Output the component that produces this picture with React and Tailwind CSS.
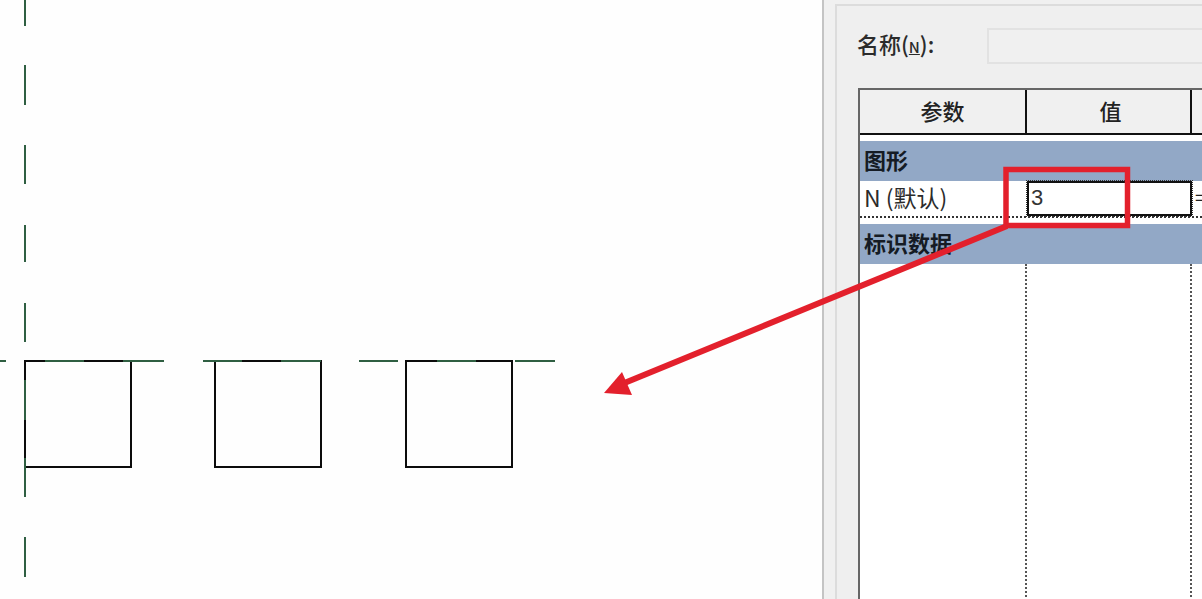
import React from 'react';

const cjk = "font-['Noto_Sans_CJK_SC','Liberation_Sans',sans-serif]";

const GREEN = '#2f5f42';

// segments on the reference lines: green dashes and the black square edges
const greenLines = [
  [25, 0, 25, 26], [25, 65, 25, 105], [25, 145, 25, 184], [25, 225, 25, 262], [25, 303, 25, 342],
  [25, 380, 25, 420], [25, 458, 25, 497], [25, 537, 25, 577],
  [0, 361, 6, 361], [45, 361, 84, 361], [123, 361, 164, 361], [203, 361, 242, 361], [281, 361, 321, 361],
  [359, 361, 398, 361], [437, 361, 476, 361], [515, 361, 555, 361],
];

const blackLines = [
  [25, 361, 45, 361], [84, 361, 123, 361], [131, 360, 131, 468], [24, 467, 132, 467],
  [25, 360, 25, 380], [25, 420, 25, 458],
  [242, 361, 281, 361], [215, 360, 215, 468], [321, 360, 321, 468], [214, 467, 322, 467],
  [405, 361, 437, 361], [476, 361, 513, 361], [406, 360, 406, 468], [512, 360, 512, 468], [405, 467, 513, 467],
];

function Drawing() {
  return (
    <svg width="822" height="599" className="block shrink-0 bg-[#fefefe]">
      {blackLines.map((l, i) => (
        <line key={i} x1={l[0]} y1={l[1]} x2={l[2]} y2={l[3]} stroke="#0c0c0c" strokeWidth="2" />
      ))}
      {greenLines.map((l, i) => (
        <line key={i} x1={l[0]} y1={l[1]} x2={l[2]} y2={l[3]} stroke={GREEN} strokeWidth="2" />
      ))}
    </svg>
  );
}

function GroupRow({ children }) {
  return (
    <div className="h-[40px] bg-[#92a8c6] pl-[4px] text-[22px] leading-[37px] font-bold text-[#151b24]">
      {children}
    </div>
  );
}

function ParamTable() {
  return (
    <div className="ml-px flex h-[520px] w-[400px] flex-col border-t-2 border-l-2 border-[#666666] bg-white">
      <div className="flex h-[45px] shrink-0 border-b-2 border-[#111111] bg-[#f0f0f0] text-[22px] leading-[41px] font-medium text-[#222222]">
        <div className="w-[167px] border-r-2 border-[#111111] text-center">参数</div>
        <div className="w-[165px] border-r-2 border-[#111111] pl-[4px] text-center">值</div>
        <div className="flex-1" />
      </div>
      <div className="h-[6px] shrink-0" />
      <GroupRow>图形</GroupRow>
      <div className="flex h-[37px] shrink-0 border-b-2 border-dotted border-[#333333]">
        <div className="w-[167px] shrink-0 pl-[4px] text-[23px] leading-[32px] text-[#2b2b2b]">N (默认)</div>
        <div className="h-[35px] w-[165px] shrink-0 border-2 border-[#111111] pl-[2px] font-['Liberation_Sans',sans-serif] text-[22px] leading-[29px] text-[#333333] outline-1 outline-dotted outline-[#333333]">
          3
        </div>
        <div className="pl-[3px] text-[20px] leading-[32px] text-[#222222]">=</div>
      </div>
      <div className="h-[6px] shrink-0" />
      <GroupRow>标识数据</GroupRow>
      <div className="flex flex-1">
        <div className="w-[167px] border-r-2 border-dotted border-[#555555]" />
        <div className="w-[165px] border-r-2 border-dotted border-[#555555]" />
      </div>
    </div>
  );
}

function PropertiesPanel() {
  return (
    <div className="flex-1 overflow-hidden border-l-2 border-[#c4c4c4] bg-[#f0f0f0] pt-[4px] pl-[11px]">
      <div className="h-[600px] w-[420px] border-t-2 border-l-2 border-[#dcdcdc] bg-[#efefef] pl-[20px]">
        <div className="flex h-[82px] items-start pt-[22px]">
          <div className="w-[130px] shrink-0 text-[22px] leading-[30px] font-medium text-[#2b2b2b]">
            名称(<u className="text-[15px]">N</u>):
          </div>
          <div className="h-[36px] w-[300px] shrink-0 border-2 border-[#e2e2e2] bg-[#f0f0f0]" />
        </div>
        <ParamTable />
      </div>
    </div>
  );
}

function Annotation() {
  return (
    <svg width="1202" height="599" className="pointer-events-none absolute top-0 left-0">
      <rect x="1006" y="169.500" width="121.500" height="56" fill="none" stroke="#e3202c" strokeWidth="5.500" />
      <line x1="1007" y1="226" x2="622" y2="384" stroke="#e3202c" strokeWidth="6" />
      <polygon points="604,393 622,372 632,395" fill="#e3202c" />
    </svg>
  );
}

export default function App() {
  return (
    <div className={`relative flex h-[599px] w-[1202px] overflow-hidden bg-white ${cjk}`}>
      <Drawing />
      <PropertiesPanel />
      <Annotation />
    </div>
  );
}
